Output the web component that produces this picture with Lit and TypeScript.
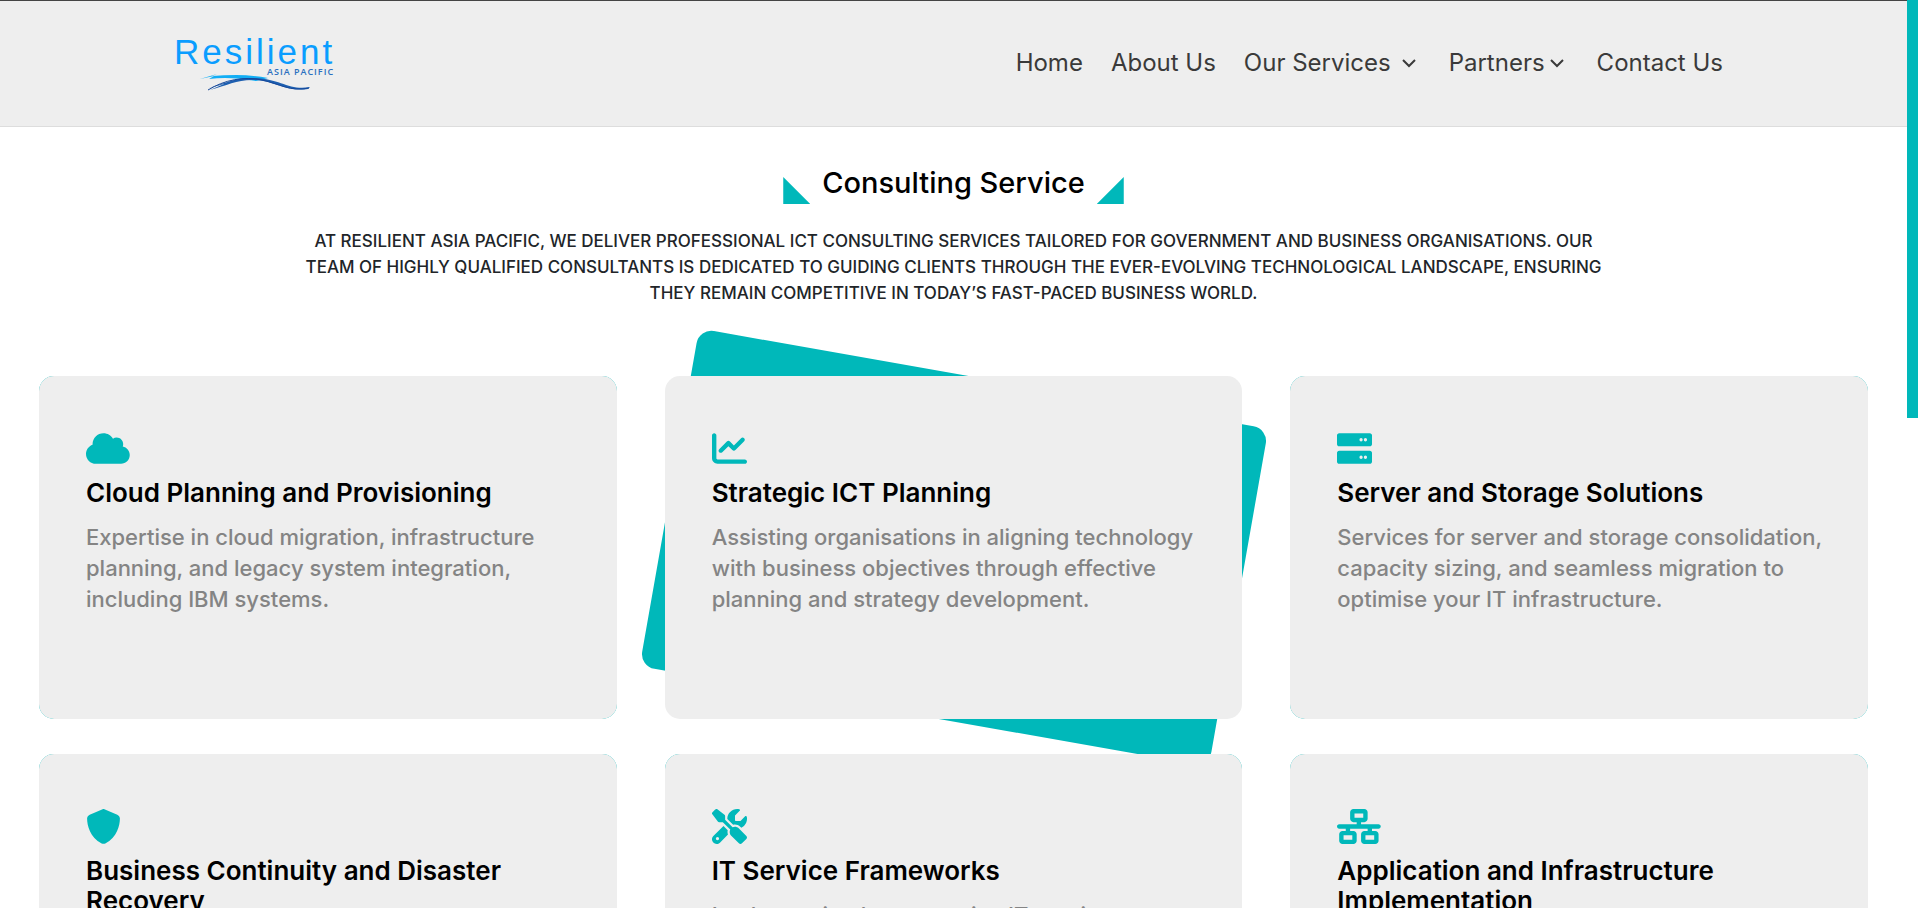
import { LitElement, html, svg, css } from "lit";
import { customElement, property } from "lit/decorators.js";

type Icon = { width: number; path: string };

const icons: Record<string, Icon> = {
  cloud: {
    width: 640,
    path: "M0 336c0 79.5 64.5 144 144 144H512c70.7 0 128-57.3 128-128c0-61.9-44-113.6-102.4-125.4c4.1-10.7 6.4-22.4 6.4-34.6c0-53-43-96-96-96c-19.7 0-38.1 6-53.3 16.2C367 64.2 315.3 32 256 32C167.6 32 96 103.6 96 192c0 2.7 .1 5.4 .2 8.1C40.2 219.8 0 273.2 0 336z",
  },
  chart: {
    width: 512,
    path: "M64 64c0-17.7-14.3-32-32-32S0 46.3 0 64V400c0 44.2 35.8 80 80 80H480c17.7 0 32-14.3 32-32s-14.3-32-32-32H80c-8.8 0-16-7.2-16-16V64zm406.6 86.6c12.5-12.5 12.5-32.8 0-45.3s-32.8-12.5-45.3 0L320 210.7l-57.4-57.4c-12.5-12.5-32.8-12.5-45.3 0l-112 112c-12.5 12.5-12.5 32.8 0 45.3s32.8 12.5 45.3 0L240 221.3l57.4 57.4c12.5 12.5 32.8 12.5 45.3 0l128-128z",
  },
  server: {
    width: 512,
    path: "M480 288H32c-17.6 0-32 14.4-32 32v128c0 17.6 14.4 32 32 32h448c17.6 0 32-14.4 32-32V320c0-17.6-14.4-32-32-32zM352 408a24 24 0 1 1 0-48 24 24 0 1 1 0 48zM416 408a24 24 0 1 1 0-48 24 24 0 1 1 0 48zM480 32H32C14.4 32 0 46.4 0 64v128c0 17.6 14.4 32 32 32h448c17.6 0 32-14.4 32-32V64c0-17.6-14.4-32-32-32zM352 152a24 24 0 1 1 0-48 24 24 0 1 1 0 48zM416 152a24 24 0 1 1 0-48 24 24 0 1 1 0 48z",
  },
  shield: {
    width: 512,
    path: "M256 0c4.6 0 9.2 1 13.4 2.9L457.7 82.8c22 9.3 38.4 31 38.3 57.2c-.5 99.2-41.3 280.7-213.6 363.2c-16.7 8-36.1 8-52.8 0C57.3 420.7 16.5 239.2 16 140c-.1-26.2 16.3-47.9 38.3-57.2L242.7 2.9C246.8 1 251.4 0 256 0z",
  },
  tools: {
    width: 512,
    path: "M78.6 5C69.1-2.4 55.6-1.5 47 7L7 47c-8.5 8.5-9.4 22-2.1 31.6l80 104c4.5 5.9 11.6 9.4 19 9.4h54.1l109 109c-14.7 29-10 65.4 14.3 89.6l112 112c12.5 12.5 32.8 12.5 45.3 0l64-64c12.5-12.5 12.5-32.8 0-45.3l-112-112c-24.2-24.2-60.6-29-89.6-14.3l-109-109V104c0-7.5-3.5-14.5-9.4-19L78.6 5zM19.9 396.1C7.2 408.8 0 426.1 0 444.1C0 481.6 30.4 512 67.9 512c18 0 35.3-7.2 48-19.9L233.7 374.3c-7.8-20.9-9-43.6-3.6-65.1l-61.7-61.7L19.9 396.1zM512 144c0-10.5-1.1-20.7-3.2-30.5c-2.4-11.2-16.1-14.1-24.2-6l-63.9 63.9c-3 3-7.1 4.7-11.3 4.7H352c-8.8 0-16-7.2-16-16V102.6c0-4.2 1.7-8.3 4.7-11.3l63.9-63.9c8.1-8.1 5.2-21.8-6-24.2C388.7 1.1 378.5 0 368 0C288.5 0 224 64.5 224 144l0 .8 85.3 85.3c36-9.1 75.8 .5 104 28.7L429 274.5c49-23 83-72.8 83-130.5zM56 432a24 24 0 1 1 48 0 24 24 0 1 1 -48 0z",
  },
  network: {
    width: 640,
    path: "M256 64H384v64H256V64zM240 0c-26.5 0-48 21.5-48 48v96c0 26.5 21.5 48 48 48h48v32H32c-17.7 0-32 14.3-32 32s14.3 32 32 32h96v32H80c-26.5 0-48 21.5-48 48v96c0 26.5 21.5 48 48 48H240c26.5 0 48-21.5 48-48V368c0-26.5-21.5-48-48-48H192V288H448v32H400c-26.5 0-48 21.5-48 48v96c0 26.5 21.5 48 48 48H560c26.5 0 48-21.5 48-48V368c0-26.5-21.5-48-48-48H512V288h96c17.7 0 32-14.3 32-32s-14.3-32-32-32H352V192h48c26.5 0 48-21.5 48-48V48c0-26.5-21.5-48-48-48H240zM96 448V384H224v64H96zm320-64H544v64H416V384z",
  },
};

const services = [
  {
    icon: "cloud",
    title: "Cloud Planning and Provisioning",
    text: "Expertise in cloud migration, infrastructure planning, and legacy system integration, including IBM systems.",
  },
  {
    icon: "chart",
    title: "Strategic ICT Planning",
    text: "Assisting organisations in aligning technology with business objectives through effective planning and strategy development.",
    active: true,
  },
  {
    icon: "server",
    title: "Server and Storage Solutions",
    text: "Services for server and storage consolidation, capacity sizing, and seamless migration to optimise your IT infrastructure.",
  },
  {
    icon: "shield",
    title: "Business Continuity and Disaster Recovery",
    text: "",
  },
  {
    icon: "tools",
    title: "IT Service Frameworks",
    text: "Implementing best-practice IT service",
  },
  {
    icon: "network",
    title: "Application and Infrastructure Implementation",
    text: "",
  },
];

@customElement("service-card")
class ServiceCard extends LitElement {
  @property() icon = "cloud";
  @property() heading = "";
  @property() text = "";
  @property({ type: Boolean, reflect: true }) active = false;

  static styles = css`
    :host {
      display: block;
      position: relative;
    }
    .backdrop {
      position: absolute;
      inset: 0;
      border-radius: 15px;
      background: #00b8ba;
    }
    :host([active]) .backdrop {
      transform: rotate(10deg);
    }
    .card {
      position: relative;
      box-sizing: border-box;
      height: 100%;
      padding: 55px 40px 40px 47px;
      border-radius: 15px;
      background: #eee;
    }
    .icon {
      display: block;
      height: 35px;
      fill: #00b8ba;
    }
    h2 {
      margin: 12px 0 14px;
      font-size: 26px;
      line-height: 30px;
      font-weight: 600;
      color: #000;
    }
    p {
      margin: 0;
      font-size: 22px;
      line-height: 31px;
      font-weight: 500;
      color: #848484;
    }
  `;

  render() {
    const icon = icons[this.icon];
    return html`
      <div class="backdrop"></div>
      <article class="card">
        <svg class="icon" viewBox="0 0 ${icon.width} 512" aria-hidden="true">
          ${svg`<path fill-rule="evenodd" d=${icon.path}></path>`}
        </svg>
        <h2>${this.heading}</h2>
        ${this.text ? html`<p>${this.text}</p>` : ""}
      </article>
    `;
  }
}

@customElement("app-root")
class AppRoot extends LitElement {
  static styles = css`
    :host {
      display: flex;
      height: 100vh;
      overflow: hidden;
      background: #fff;
      font-family: Inter, "Open Sans", sans-serif;
    }
    .page {
      flex: 1;
      min-width: 0;
    }
    .rail {
      width: 11px;
    }
    .thumb {
      height: 46%;
      background: #00b8ba;
    }
    header {
      display: flex;
      align-items: center;
      justify-content: space-between;
      box-sizing: border-box;
      height: 127px;
      padding: 0 184px 2px 172px;
      border-top: 1px solid #444;
      border-bottom: 1px solid #ddd;
      background: #eee;
    }
    .logo {
      display: block;
      width: 166px;
      height: 60px;
    }
    .name {
      font: 35px "Liberation Sans", Arial, sans-serif;
      letter-spacing: 3px;
      fill: #0a9dff;
    }
    .region {
      font: 600 9px "Open Sans", sans-serif;
      letter-spacing: 1px;
      fill: #2a6fc0;
    }
    nav {
      display: flex;
      align-items: center;
      gap: 28px;
    }
    nav a {
      display: flex;
      align-items: center;
      font-size: 24px;
      line-height: 36px;
      color: #3a3a3a;
      text-decoration: none;
      white-space: nowrap;
    }
    .caret {
      width: 16px;
      height: 16px;
      margin: 0 4px;
      fill: none;
      stroke: #3a3a3a;
      stroke-width: 2;
    }
    .spaced {
      margin-left: 10px;
    }
    .intro {
      padding: 35px 0 70px;
      text-align: center;
    }
    .title {
      display: flex;
      justify-content: center;
      align-items: flex-end;
      gap: 12px;
    }
    h1 {
      margin: 0;
      font-size: 29px;
      line-height: 42px;
      font-weight: 500;
      color: #000;
    }
    .corner {
      width: 27px;
      height: 27px;
      background: #00b8ba;
      clip-path: polygon(0 0, 100% 100%, 0 100%);
    }
    .right {
      clip-path: polygon(100% 0, 100% 100%, 0 100%);
    }
    .lead {
      max-width: 1320px;
      margin: 24px auto 0;
      font-size: 17px;
      line-height: 26px;
      font-weight: 500;
      text-transform: uppercase;
      color: #212529;
    }
    .grid {
      display: grid;
      grid-template-columns: repeat(3, 1fr);
      grid-auto-rows: 343px;
      gap: 35px 48px;
      padding: 0 39px;
    }
  `;

  caret(spaced: boolean) {
    return html`<svg class="caret ${spaced ? "spaced" : ""}" viewBox="0 0 16 16" aria-hidden="true">
      <path d="M2 5 8 11 14 5"></path>
    </svg>`;
  }

  render() {
    return html`
      <div class="page">
        <header>
          <a href="#" aria-label="Resilient Asia Pacific">
            <svg class="logo" viewBox="0 0 166 60">
              <text class="name" x="2" y="31">Resilient</text>
              <text class="region" x="95" y="42">ASIA PACIFIC</text>
              <path fill="#12aef5" d="M28 46 45 41 40 43C58 42 76 41 96 45L84 48C66 45 52 44 37 46L42 43Z"></path>
              <path fill="#1d5fb0" d="M30 57C52 51 62 44 84 45 108 46 118 58 138 54L136 56C115 59 102 48 84 47 66 46 56 52 38 57L52 51Z"></path>
              <path fill="none" stroke="#15479a" d="M36 57C52 47 72 43 90 47S118 59 137 55"></path>
            </svg>
          </a>
          <nav>
            <a href="#">Home</a>
            <a href="#">About Us</a>
            <a href="#">Our Services ${this.caret(true)}</a>
            <a href="#">Partners ${this.caret(false)}</a>
            <a href="#">Contact Us</a>
          </nav>
        </header>
        <main>
          <section class="intro">
            <div class="title">
              <span class="corner"></span>
              <h1>Consulting Service</h1>
              <span class="corner right"></span>
            </div>
            <p class="lead">
              At Resilient Asia Pacific, we deliver professional ICT consulting services tailored for
              government and business organisations. Our team of highly qualified consultants is dedicated
              to guiding clients through the ever-evolving technological landscape, ensuring they remain
              competitive in today’s fast-paced business world.
            </p>
          </section>
          <section class="grid">
            ${services.map(
              (s) => html`<service-card
                .icon=${s.icon}
                .heading=${s.title}
                .text=${s.text}
                .active=${!!s.active}
              ></service-card>`
            )}
          </section>
        </main>
      </div>
      <div class="rail" aria-hidden="true"><div class="thumb"></div></div>
    `;
  }
}
